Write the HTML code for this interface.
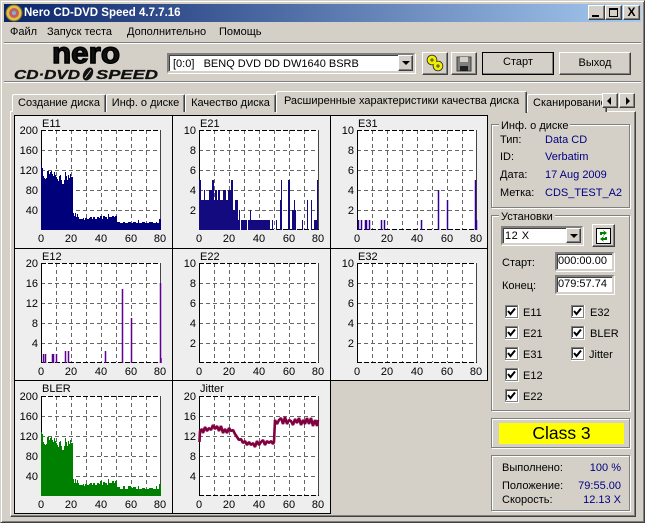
<!DOCTYPE html>
<html><head><meta charset="utf-8"><style>
html,body{margin:0;padding:0;background:#d4d0c8}
#w{position:relative;width:645px;height:523px;overflow:hidden;background:#d4d0c8;font:11px "Liberation Sans","Noto Sans CJK JP",sans-serif;color:#000}
#w div,#w span.a{position:absolute;white-space:nowrap;box-sizing:border-box}
.t{line-height:14px;height:14px}
.n{color:#000080}
.btn{background:#d4d0c8;border:1px solid;border-color:#fff #404040 #404040 #fff;box-shadow:inset -1px -1px #808080;text-align:center}
.sunk{background:#fff;border:2px solid;border-color:#808080 #d4d0c8 #d4d0c8 #808080;box-shadow:inset 1px 1px #404040,1px 1px #fff,-1px -1px #d4d0c8}
.grp{border:1px solid #808080;box-shadow:inset 1px 1px #fff,1px 1px #fff}
.ttl{background:#d4d0c8;padding:0 2px;line-height:14px;height:14px}
.tab{background:#d4d0c8;border-top:1px solid #fff;border-left:1px solid #fff;border-right:1px solid #404040;box-shadow:inset -1px 0 #808080;border-radius:2px 2px 0 0;text-align:center;line-height:16px}
.hl{height:1px;background:#808080;border-bottom:1px solid #fff;box-sizing:content-box!important}
svg{position:absolute;left:0;top:0}
text{font:11px "Liberation Sans",sans-serif}
</style></head><body><div id="w">

<!-- window frame -->
<div style="left:0;top:0;width:645px;height:523px;border:1px solid;border-color:#d4d0c8 #404040 #404040 #d4d0c8;box-shadow:inset 1px 1px #fff,inset -1px -1px #808080"></div>
<!-- title -->
<div style="left:4px;top:4px;width:637px;height:18px;background:linear-gradient(90deg,#0a246a,#a6caf0)"></div>
<div style="left:24px;top:5px;color:#fff;font:bold 11.5px/16px 'Liberation Sans',sans-serif">Nero CD-DVD Speed 4.7.7.16</div>
<svg width="24" height="24" style="left:4px;top:3px"><circle cx="10" cy="10" r="8" fill="#e0c040" stroke="#807020"/><circle cx="10" cy="10" r="5" fill="#c06060"/><circle cx="10" cy="10" r="2" fill="#80b0e0"/></svg>
<div class="btn" style="left:588px;top:5px;width:17px;height:15px"><span class="a" style="left:3px;top:9px;width:7px;height:2px;background:#000"></span></div>
<div class="btn" style="left:605px;top:5px;width:17px;height:15px"><span class="a" style="left:3px;top:2px;width:9px;height:9px;border:1px solid #000;border-top-width:2px;box-sizing:border-box"></span></div>
<div class="btn" style="left:623px;top:5px;width:17px;height:15px;font:bold 12px/12px 'Liberation Sans',sans-serif">X</div>

<!-- menu -->
<div class="t" style="left:10px;top:25px">Файл</div>
<div class="t" style="left:47px;top:25px">Запуск теста</div>
<div class="t" style="left:127px;top:25px">Дополнительно</div>
<div class="t" style="left:219px;top:25px">Помощь</div>
<div class="hl" style="left:4px;top:42px;width:637px"></div>

<!-- logo -->
<svg width="170" height="40" style="left:0;top:42px">
<text x="52" y="21" textLength="68" lengthAdjust="spacingAndGlyphs" style="font:bold 30px 'Liberation Sans',sans-serif" stroke="#000" stroke-width="1.4" fill="#111">nero</text>
<text x="14" y="37" textLength="66" lengthAdjust="spacingAndGlyphs" style="font:italic bold 12.5px 'Liberation Sans',sans-serif" stroke="#111" stroke-width=".3" fill="#111">CD·DVD</text>
<ellipse cx="88" cy="32" rx="4.5" ry="7" transform="rotate(30 88 32)" fill="#111"/>
<path d="M85 36L91 28" stroke="#d4d0c8" fill="none"/>
<text x="96" y="37" textLength="62" lengthAdjust="spacingAndGlyphs" style="font:italic bold 12.5px 'Liberation Sans',sans-serif" stroke="#111" stroke-width=".3" fill="#111">SPEED</text>
</svg>

<!-- toolbar -->
<div class="sunk" style="left:167px;top:53px;width:248px;height:20px"></div>
<div class="t" style="left:173px;top:57px">[0:0]&nbsp;&nbsp; BENQ DVD DD DW1640 BSRB</div>
<div class="btn" style="left:398px;top:55px;width:15px;height:16px"><span class="a" style="left:3px;top:5px;border-left:4px solid transparent;border-right:4px solid transparent;border-top:4px solid #000"></span></div>
<div class="btn" style="left:422px;top:52px;width:26px;height:23px"></div>
<svg width="26" height="23" style="left:422px;top:52px"><g fill="none" stroke="#222" stroke-width="4.6"><circle cx="10" cy="8" r="3"/><circle cx="16" cy="14" r="3"/></g><g fill="none" stroke="#f0f000" stroke-width="3"><circle cx="10" cy="8" r="3"/><circle cx="16" cy="14" r="3"/></g></svg>
<div class="btn" style="left:451px;top:52px;width:26px;height:23px"></div>
<svg width="26" height="23" style="left:451px;top:52px"><path d="M6 5H20V19H6z" fill="#808080" stroke="#404040"/><path d="M9 5H17V10H9z" fill="#d4d0c8"/><path d="M9 14H17V19H9z" fill="#202020"/></svg>
<div class="btn" style="left:482px;top:52px;width:72px;height:23px;line-height:19px;outline:1px solid #000;outline-offset:-1px">Старт</div>
<div class="btn" style="left:559px;top:52px;width:72px;height:23px;line-height:20px">Выход</div>
<div class="hl" style="left:4px;top:81px;width:637px"></div>

<!-- tab panel -->
<div style="left:10px;top:111px;width:626px;height:406px;border:1px solid;border-color:#fff #404040 #404040 #fff;box-shadow:inset -1px -1px #808080"></div>
<div class="tab" style="left:12px;top:94px;width:94px;height:18px">Создание диска</div>
<div class="tab" style="left:106px;top:94px;width:79px;height:18px">Инф. о диске</div>
<div class="tab" style="left:185px;top:94px;width:91px;height:18px">Качество диска</div>
<div class="tab" style="left:276px;top:91px;width:251px;height:22px;line-height:19px;z-index:2">Расширенные характеристики качества диска</div>
<div class="tab" style="left:527px;top:94px;width:80px;height:18px;text-align:left;padding-left:5px;overflow:hidden">Сканирование</div>
<div class="btn" style="left:602px;top:93px;width:16px;height:15px;z-index:3"><span class="a" style="left:4px;top:3px;border-top:4px solid transparent;border-bottom:4px solid transparent;border-right:4px solid #000"></span></div>
<div class="btn" style="left:619px;top:93px;width:16px;height:15px;z-index:3"><span class="a" style="left:6px;top:3px;border-top:4px solid transparent;border-bottom:4px solid transparent;border-left:4px solid #000"></span></div>

<!-- charts -->
<svg width="645" height="523" style="z-index:1">
<defs>
<g id="grid" shape-rendering="crispEdges">
<rect x="0" y="0" width="120" height="99" fill="#fff"/>
<path d="M15.5 0V99M30.5 0V99M45.5 0V99M60.5 0V99M75.5 0V99M90.5 0V99M105.5 0V99M0 20.5H120M0 40.5H120M0 60.5H120M0 80.5H120" stroke="#666" stroke-dasharray="4 3" fill="none"/>
<path d="M0 .5H120M0 99.5H120" stroke="#000" stroke-dasharray="5 2" fill="none"/>
<path d="M119.5 0V99" stroke="#444" fill="none"/>
<path d="M.5 0V99" stroke="#000" fill="none"/>
</g>
</defs>
<g shape-rendering="crispEdges">
<rect x="15" y="116" width="473" height="397" fill="#eee"/>
<rect x="331" y="381" width="160" height="133" fill="#d4d0c8"/>
<path d="M14.5 115.5H487.5V380.5H330.5V513.5H14.5ZM172.5 115.5V513.5M330.5 115.5V380.5M14.5 248.5H487.5M14.5 380.5H330.5" fill="none" stroke="#000"/>
</g>

<use href="#grid" x="41" y="130"/><use href="#grid" x="199" y="130"/><use href="#grid" x="357" y="130"/>
<use href="#grid" x="41" y="263"/><use href="#grid" x="199" y="263"/><use href="#grid" x="357" y="263"/>
<use href="#grid" x="41" y="396"/><use href="#grid" x="199" y="396"/>

<!-- E11 -->
<path shape-rendering="crispEdges" fill="#00007a" d="M41 230V166H42V168H43V176H44V178H45V179H46V178H47V171H49V174H50V172H51V171H52V174H53V176H54V172H55V175H56V177H57V179H58V181H59V176H60V175H61V180H62V184H64V180H65V172H66V176H67V180H68V175H69V178H70V174H71V177H73V213H74V216H75V213H76V217H77V214H78V217H79V219H83V218H84V220H85V218H87V219H89V218H90V217H92V219H93V217H95V219H97V217H99V218H100V216H102V219H103V216H105V217H107V219H108V214H109V217H112V216H114V217H115V216H117V222H120V223H123V222H125V223H128V222H131V223H133V222H136V223H138V220H139V223H142V222H145V223H149V222H153V223H156V222H157V223H159V219H161V230Z"/>
<!-- BLER -->
<path shape-rendering="crispEdges" fill="#008000" d="M41 496V432H42V434H43V442H44V444H45V445H46V444H47V437H49V440H50V438H51V437H52V440H53V442H54V438H55V441H56V443H57V445H58V447H59V442H60V441H61V446H62V450H64V446H65V438H66V442H67V446H68V441H69V444H70V440H71V443H73V479H74V483H75V479H76V483H77V480H78V483H79V485H83V484H84V486H85V484H87V485H89V484H90V483H92V485H93V483H95V485H97V483H99V484H100V481H102V485H103V482H105V483H107V485H108V479H109V483H112V481H114V483H115V481H117V487H120V489H123V486H125V489H128V486H131V488H133V487H136V489H138V486H139V489H142V488H145V489H149V488H153V489H156V486H157V489H159V484H161V496Z"/>
<!-- E21 -->
<path shape-rendering="crispEdges" fill="#140a80" d="M199 230V180H201V200H204V190H205V200H209V190H212V180H214V200H215V190H217V200H218V190H220V200H223V190H226V200H228V190H231V180H233V210H235V200H238V220H239V210H240V230H241V220H247V230H248V220H250V210H251V220H270V230H272V220H273V230H276V220H277V230H280V200H281V180H282V230H288V180H290V230H292V210H294V200H295V210H296V230H302V220H303V230H307V200H308V230H311V200H312V230H314V220H317V180H318V230Z"/>
<!-- E31 -->
<path stroke="#300090" stroke-width="1.5" fill="none" d="M358.5 230V220M361.5 230V220M365.5 230V220M366.5 230V220M369.5 230V220M381.5 230V220M384.5 230V220M421.5 230V220M438.5 230V190M447.5 230V200M475.5 230V180M476.5 230V220"/>
<!-- E12 -->
<path stroke="#600090" stroke-width="1.5" fill="none" d="M43.5 363V354M45.5 363V354M52.5 363V354M53.5 363V354M56.5 363V354M65.5 363V351M68.5 363V351M105.5 363V351M122.5 363V289M131.5 363V318M160.5 363V283M161 363V358"/>
<!-- Jitter -->
<path fill="none" stroke="#800040" stroke-width="2.6" stroke-linejoin="bevel" d="M199.5 442L200 431L202 429L203 433L205 427L207 431L209 428L211 430L213 425L215 429L217 426L219 431L221 426L223 433L225 429L227 433L229 428L231 431L233 430L235 434L237 437L239 440L241 439L243 443L245 441L247 445L249 442L251 445L253 443L255 447L257 441L259 445L261 442L263 440L265 445L267 441L269 443L271 441L273 444L274 442L275 420L277 424L279 420L281 418L283 424L285 417L287 424L289 420L291 421L293 425L295 419L297 423L299 418L301 425L303 420L305 424L307 418L309 424L311 418L313 426L315 420L317 426L318 420"/>

<!-- labels -->
<g text-anchor="end">
<text x="38" y="134">200</text><text x="38" y="154">160</text><text x="38" y="174">120</text><text x="38" y="194">80</text><text x="38" y="214">40</text>
<text x="196" y="134">10</text><text x="196" y="154">8</text><text x="196" y="174">6</text><text x="196" y="194">4</text><text x="196" y="214">2</text>
<text x="354" y="134">10</text><text x="354" y="154">8</text><text x="354" y="174">6</text><text x="354" y="194">4</text><text x="354" y="214">2</text>
<text x="38" y="267">20</text><text x="38" y="287">16</text><text x="38" y="307">12</text><text x="38" y="327">8</text><text x="38" y="347">4</text>
<text x="196" y="267">10</text><text x="196" y="287">8</text><text x="196" y="307">6</text><text x="196" y="327">4</text><text x="196" y="347">2</text>
<text x="354" y="267">10</text><text x="354" y="287">8</text><text x="354" y="307">6</text><text x="354" y="327">4</text><text x="354" y="347">2</text>
<text x="38" y="400">200</text><text x="38" y="420">160</text><text x="38" y="440">120</text><text x="38" y="460">80</text><text x="38" y="480">40</text>
<text x="196" y="400">20</text><text x="196" y="420">16</text><text x="196" y="440">12</text><text x="196" y="460">8</text><text x="196" y="480">4</text>
</g>
<g text-anchor="middle">
<text x="41" y="242">0</text><text x="71" y="242">20</text><text x="101" y="242">40</text><text x="131" y="242">60</text><text x="160" y="242">80</text>
<text x="199" y="242">0</text><text x="229" y="242">20</text><text x="259" y="242">40</text><text x="289" y="242">60</text><text x="318" y="242">80</text>
<text x="357" y="242">0</text><text x="387" y="242">20</text><text x="417" y="242">40</text><text x="447" y="242">60</text><text x="476" y="242">80</text>
<text x="41" y="375">0</text><text x="71" y="375">20</text><text x="101" y="375">40</text><text x="131" y="375">60</text><text x="160" y="375">80</text>
<text x="199" y="375">0</text><text x="229" y="375">20</text><text x="259" y="375">40</text><text x="289" y="375">60</text><text x="318" y="375">80</text>
<text x="357" y="375">0</text><text x="387" y="375">20</text><text x="417" y="375">40</text><text x="447" y="375">60</text><text x="476" y="375">80</text>
<text x="41" y="508">0</text><text x="71" y="508">20</text><text x="101" y="508">40</text><text x="131" y="508">60</text><text x="160" y="508">80</text>
<text x="199" y="508">0</text><text x="229" y="508">20</text><text x="259" y="508">40</text><text x="289" y="508">60</text><text x="318" y="508">80</text>
</g>
<text x="42" y="127">E11</text><text x="200" y="127">E21</text><text x="358" y="127">E31</text>
<text x="42" y="260">E12</text><text x="200" y="260">E22</text><text x="358" y="260">E32</text>
<text x="42" y="392">BLER</text><text x="200" y="392">Jitter</text>
</svg>

<!-- disc info -->
<div class="grp" style="left:491px;top:124px;width:139px;height:84px"></div>
<div class="ttl" style="left:499px;top:119px">Инф. о диске</div>
<div class="t" style="left:500px;top:133px">Тип:</div><div class="t n" style="left:545px;top:133px">Data CD</div>
<div class="t" style="left:500px;top:150px">ID:</div><div class="t n" style="left:545px;top:150px">Verbatim</div>
<div class="t" style="left:500px;top:168px">Дата:</div><div class="t n" style="left:545px;top:168px">17 Aug 2009</div>
<div class="t" style="left:500px;top:186px">Метка:</div><div class="t n" style="left:545px;top:186px">CDS_TEST_A2</div>

<!-- settings -->
<div class="grp" style="left:491px;top:215px;width:139px;height:196px"></div>
<div class="ttl" style="left:499px;top:210px">Установки</div>
<div class="sunk" style="left:501px;top:226px;width:82px;height:19px"></div>
<div class="t" style="left:505px;top:229px;letter-spacing:.5px">12 X</div>
<div class="btn" style="left:566px;top:228px;width:15px;height:15px"><span class="a" style="left:3px;top:5px;border-left:4px solid transparent;border-right:4px solid transparent;border-top:4px solid #000"></span></div>
<div class="btn" style="left:592px;top:224px;width:23px;height:23px"></div>
<svg width="23" height="23" style="left:592px;top:224px"><rect x="4.5" y="4.5" width="14" height="15" fill="#fff" stroke="#000"/><path d="M8 11V8H12L11 6L15 9L11 12L12 10H10V11ZM15 13V16H11L12 18L8 15L12 12L11 14H13V13Z" fill="#008000"/></svg>
<div class="t" style="left:502px;top:256px">Старт:</div>
<div class="sunk" style="left:555px;top:252px;width:59px;height:19px;padding-left:1px;line-height:14px">000:00.00</div>
<div class="t" style="left:502px;top:279px">Конец:</div>
<div class="sunk" style="left:555px;top:275px;width:59px;height:19px;padding-left:1px;line-height:14px">079:57.74</div>

<svg width="645" height="523" style="z-index:2">
<g id="boxes" shape-rendering="crispEdges">
<g fill="#fff" stroke="#808080">
<rect x="505.5" y="305.5" width="12" height="12"/><rect x="505.5" y="326.5" width="12" height="12"/><rect x="505.5" y="347.5" width="12" height="12"/><rect x="505.5" y="368.5" width="12" height="12"/><rect x="505.5" y="389.5" width="12" height="12"/>
<rect x="571.5" y="305.5" width="12" height="12"/><rect x="571.5" y="326.5" width="12" height="12"/><rect x="571.5" y="347.5" width="12" height="12"/>
</g>
<path fill="none" stroke="#404040" d="M506.5 316V306.5H517M506.5 337V327.5H517M506.5 358V348.5H517M506.5 379V369.5H517M506.5 400V390.5H517M572.5 316V306.5H583M572.5 337V327.5H583M572.5 358V348.5H583"/>
<path fill="none" stroke="#fff" d="M505 318.5H518.5V305M505 339.5H518.5V326M505 360.5H518.5V347M505 381.5H518.5V368M505 402.5H518.5V389M571 318.5H584.5V305M571 339.5H584.5V326M571 360.5H584.5V347"/>
</g>
<g fill="none" stroke="#000" stroke-width="2">
<path d="M508 311L510.5 314L515 308.5"/><path d="M508 332L510.5 335L515 329.5"/><path d="M508 353L510.5 356L515 350.5"/><path d="M508 374L510.5 377L515 371.5"/><path d="M508 395L510.5 398L515 392.5"/>
<path d="M574 311L576.5 314L581 308.5"/><path d="M574 332L576.5 335L581 329.5"/><path d="M574 353L576.5 356L581 350.5"/>
</g>
<text x="523" y="316">E11</text><text x="523" y="337">E21</text><text x="523" y="358">E31</text><text x="523" y="379">E12</text><text x="523" y="400">E22</text>
<text x="590" y="316">E32</text><text x="590" y="337">BLER</text><text x="589" y="358">Jitter</text>
</svg>

<!-- class -->
<div class="grp" style="left:491px;top:418px;width:139px;height:30px"></div>
<div style="left:499px;top:423px;width:125px;height:21px;background:#ff0;text-align:center;font:17.5px/21px 'Liberation Sans',sans-serif">Class 3</div>

<!-- stats -->
<div class="grp" style="left:491px;top:455px;width:139px;height:56px"></div>
<div class="t" style="left:502px;top:461px">Выполнено:</div><div class="t n" style="right:24px;top:461px">100 %</div>
<div class="t" style="left:502px;top:479px">Положение:</div><div class="t n" style="right:24px;top:479px">79:55.00</div>
<div class="t" style="left:502px;top:493px">Скорость:</div><div class="t n" style="right:24px;top:493px">12.13 X</div>

</div></body></html>
